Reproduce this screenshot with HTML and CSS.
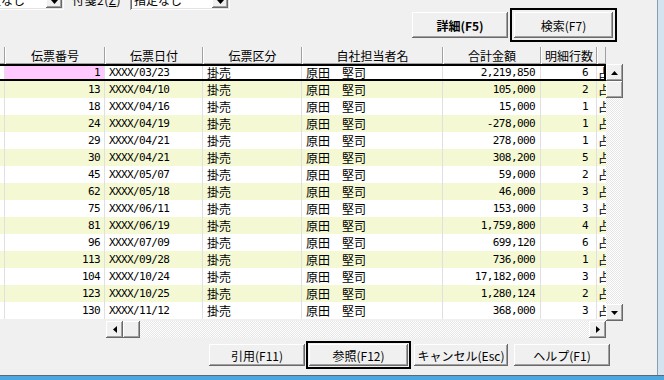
FILE: index.html
```html
<!DOCTYPE html>
<html lang="ja">
<head>
    <meta charset="UTF-8">
    <meta name="viewport" content="width=device-width, initial-scale=1.0">
    <title>伝票検索</title>
    <link rel="stylesheet" href="styles.css">
</head>
<body>
<div class="app">
    <div class="window">
        <div class="filters">
            <div class="combo combo1">
                <span class="combo-text">指定なし</span>
                <span class="sb-btn combo-btn"><svg width="7" height="4"><polygon points="0,0 7,0 3.5,4"/></svg></span>
            </div>
            <label class="flabel">付箋2(<u>Z</u>)</label>
            <div class="combo combo2">
                <span class="combo-text">指定なし</span>
                <span class="sb-btn combo-btn"><svg width="7" height="4"><polygon points="0,0 7,0 3.5,4"/></svg></span>
            </div>
        </div>

        <div class="actions">
            <button class="btn btn-detail">詳細(F5)</button>
            <div class="focus"><button class="btn btn-search">検索(F7)</button></div>
        </div>

        <div class="grid">
            <div class="head">
                <div></div>
                <div>伝票番号</div>
                <div>伝票日付</div>
                <div>伝票区分</div>
                <div>自社担当者名</div>
                <div>合計金額</div>
                <div>明細行数</div>
                <div></div>
            </div>
            <div class="body">
                <div class="rows">
                    <div class="row sel"><div></div><div>1</div><div>XXXX/03/23</div><div>掛売</div><div>原田　堅司</div><div>2,219,850</div><div>6</div><div>占</div></div>
                    <div class="row alt"><div></div><div>13</div><div>XXXX/04/10</div><div>掛売</div><div>原田　堅司</div><div>105,000</div><div>2</div><div>占</div></div>
                    <div class="row"><div></div><div>18</div><div>XXXX/04/16</div><div>掛売</div><div>原田　堅司</div><div>15,000</div><div>1</div><div>占</div></div>
                    <div class="row alt"><div></div><div>24</div><div>XXXX/04/19</div><div>掛売</div><div>原田　堅司</div><div>-278,000</div><div>1</div><div>占</div></div>
                    <div class="row"><div></div><div>29</div><div>XXXX/04/21</div><div>掛売</div><div>原田　堅司</div><div>278,000</div><div>1</div><div>占</div></div>
                    <div class="row alt"><div></div><div>30</div><div>XXXX/04/21</div><div>掛売</div><div>原田　堅司</div><div>308,200</div><div>5</div><div>占</div></div>
                    <div class="row"><div></div><div>45</div><div>XXXX/05/07</div><div>掛売</div><div>原田　堅司</div><div>59,000</div><div>2</div><div>占</div></div>
                    <div class="row alt"><div></div><div>62</div><div>XXXX/05/18</div><div>掛売</div><div>原田　堅司</div><div>46,000</div><div>3</div><div>占</div></div>
                    <div class="row"><div></div><div>75</div><div>XXXX/06/11</div><div>掛売</div><div>原田　堅司</div><div>153,000</div><div>3</div><div>占</div></div>
                    <div class="row alt"><div></div><div>81</div><div>XXXX/06/19</div><div>掛売</div><div>原田　堅司</div><div>1,759,800</div><div>4</div><div>占</div></div>
                    <div class="row"><div></div><div>96</div><div>XXXX/07/09</div><div>掛売</div><div>原田　堅司</div><div>699,120</div><div>6</div><div>占</div></div>
                    <div class="row alt"><div></div><div>113</div><div>XXXX/09/28</div><div>掛売</div><div>原田　堅司</div><div>736,000</div><div>1</div><div>占</div></div>
                    <div class="row"><div></div><div>104</div><div>XXXX/10/24</div><div>掛売</div><div>原田　堅司</div><div>17,182,000</div><div>3</div><div>占</div></div>
                    <div class="row alt"><div></div><div>123</div><div>XXXX/10/25</div><div>掛売</div><div>原田　堅司</div><div>1,280,124</div><div>2</div><div>占</div></div>
                    <div class="row"><div></div><div>130</div><div>XXXX/11/12</div><div>掛売</div><div>原田　堅司</div><div>368,000</div><div>3</div><div>占</div></div>
                </div>
                <div class="vscroll">
                    <span class="sb-btn"><svg width="7" height="4"><polygon points="3.5,0 7,4 0,4"/></svg></span>
                    <span class="sb-btn"></span>
                    <span class="track"></span>
                    <span class="sb-btn"><svg width="7" height="4"><polygon points="0,0 7,0 3.5,4"/></svg></span>
                </div>
            </div>
            <div class="hbar">
                <div class="hscroll">
                    <span class="sb-btn"><svg width="4" height="7"><polygon points="0,3.5 4,0 4,7"/></svg></span>
                    <span class="sb-btn"></span>
                    <span class="track"></span>
                    <span class="sb-btn"><svg width="4" height="7"><polygon points="0,0 4,3.5 0,7"/></svg></span>
                </div>
            </div>
        </div>

        <div class="footer">
            <button class="btn btn-cite">引用(F11)</button>
            <div class="focus focus-sm"><button class="btn btn-ref">参照(F12)</button></div>
            <button class="btn btn-cancel">キャンセル(Esc)</button>
            <button class="btn btn-help">ヘルプ(F1)</button>
        </div>
    </div>
    <div class="frame-r"></div>
</div>
<div class="frame-b"></div>
</body>
</html>
```

FILE: styles.css
```css
body {
    margin: 0;
    width: 664px;
    height: 380px;
    overflow: hidden;
    background: #f0f0f0;
    font: 12px "Noto Sans CJK JP", sans-serif;
    color: #000;
}
.app {
    display: flex;
    height: 375px;
}
.window {
    width: 657px;
    display: flex;
    flex-direction: column;
    overflow: hidden;
}
.frame-r {
    width: 7px;
    border-left: 1px solid #8a9db0;
    background: #d3e3f0;
    box-sizing: border-box;
}
.frame-b {
    height: 5px;
    border-top: 1px solid #5a6a78;
    background: #4fa7e0;
    box-sizing: border-box;
}

/* filter row, mostly scrolled off the top */
.filters {
    height: 10px;
    display: flex;
    align-items: flex-end;
    overflow: hidden;
    flex-shrink: 0;
}
.combo {
    display: flex;
    height: 21px;
    box-sizing: border-box;
    padding: 2px;
    background: #fff;
    box-shadow: inset 1px 1px #a0a0a0, inset -1px -1px #fff, inset 2px 2px #696969, inset -2px -2px #e3e3e3;
    flex-shrink: 0;
}
.combo1 { width: 91px; margin-left: -27px; }
.combo2 { width: 100px; margin-left: 3px; }
.combo-text {
    flex: 1;
    line-height: 17px;
    padding-left: 2px;
    white-space: nowrap;
    overflow: hidden;
}
.combo-btn svg { margin-top: 4px; }
.flabel {
    width: 55px;
    margin-left: 8px;
    height: 21px;
    line-height: 21px;
    white-space: nowrap;
    letter-spacing: 0.5px;
}

/* buttons */
.btn {
    border: 0;
    padding: 0;
    margin: 0;
    font: inherit;
    color: #000;
    background: #f0f0f0;
    box-shadow: inset -1px -1px #696969, inset 1px 1px #fff, inset -2px -2px #a0a0a0, inset 2px 2px #f0f0f0;
    white-space: nowrap;
}
.focus {
    border: 2px solid #000;
    padding: 2px;
    display: flex;
}
.focus-sm { padding: 1px; }
.actions {
    display: flex;
    justify-content: flex-end;
    align-items: center;
    height: 34px;
    margin-top: -2px;
    margin-bottom: 5px;
    padding-right: 40px;
    flex-shrink: 0;
}
.btn-detail { width: 96px; height: 26px; margin-right: 2px; font-weight: bold; }
.btn-search { width: 99px; height: 26px; }

/* grid */
.grid {
    margin-left: -10px;
    flex-shrink: 0;
}
.head, .row {
    display: grid;
    grid-template-columns: 15px 100px 98px 99px 141px 98px 56px 9px;
    width: 616px;
}
.head {
    height: 17px;
    line-height: 17px;
}
.head > div {
    text-align: center;
    box-shadow: inset -1px 0 #a0a0a0, inset 1px 0 #fff, inset 0 -1px #a0a0a0;
    white-space: nowrap;
    overflow: hidden;
}
.body {
    display: flex;
    height: 257px;
}
.rows { width: 616px; }
.row {
    height: 17px;
    line-height: 17px;
    background: #fff;
}
.row.alt { background: #f4f9d3; }
.row.sel {
    outline: 2px solid #000;
    outline-offset: -2px;
}
.row.sel > div:nth-child(2) { background: #ffc9ff; }
.row > div {
    border-right: 1px solid #e0e0e0;
    padding: 0 4px;
    white-space: nowrap;
    overflow: hidden;
}
.row > div:nth-child(2),
.row > div:nth-child(3),
.row > div:nth-child(6),
.row > div:nth-child(7) {
    font: 11px/18px "DejaVu Sans Mono", monospace;
    letter-spacing: -0.6px;
}
.row > div:nth-child(2),
.row > div:nth-child(6),
.row > div:nth-child(7) { text-align: right; }
.row > div:nth-child(6) { padding-right: 5px; }
.row > div:nth-child(7) { padding-right: 8px; }
.row > div:nth-child(8) { padding: 0 0 0 1px; border-right: 0; }

/* scrollbars */
.sb-btn {
    width: 17px;
    height: 17px;
    flex-shrink: 0;
    background: #f0f0f0;
    box-shadow: inset -1px -1px #696969, inset 1px 1px #fff, inset -2px -2px #a0a0a0;
    display: flex;
    align-items: center;
    justify-content: center;
}
.combo-btn { width: 16px; height: 17px; }
.vscroll, .hscroll {
    display: flex;
    background: repeating-conic-gradient(#fff 0 25%, #e6e6e6 0 50%) 0 0 / 2px 2px;
}
.vscroll {
    width: 17px;
    flex-direction: column;
}
.track { flex: 1; }
.hbar {
    height: 17px;
    padding-left: 116px;
    display: flex;
}
.hscroll { width: 500px; }

/* bottom buttons */
.footer {
    display: flex;
    align-items: center;
    height: 28px;
    margin-top: 3px;
    padding-left: 209px;
    flex-shrink: 0;
}
.btn-cite { width: 96px; height: 22px; margin-right: 1px; }
.btn-ref { width: 99px; height: 22px; }
.btn-cancel { width: 94px; height: 22px; margin-left: 3px; }
.btn-help { width: 96px; height: 22px; margin-left: 6px; }
```
